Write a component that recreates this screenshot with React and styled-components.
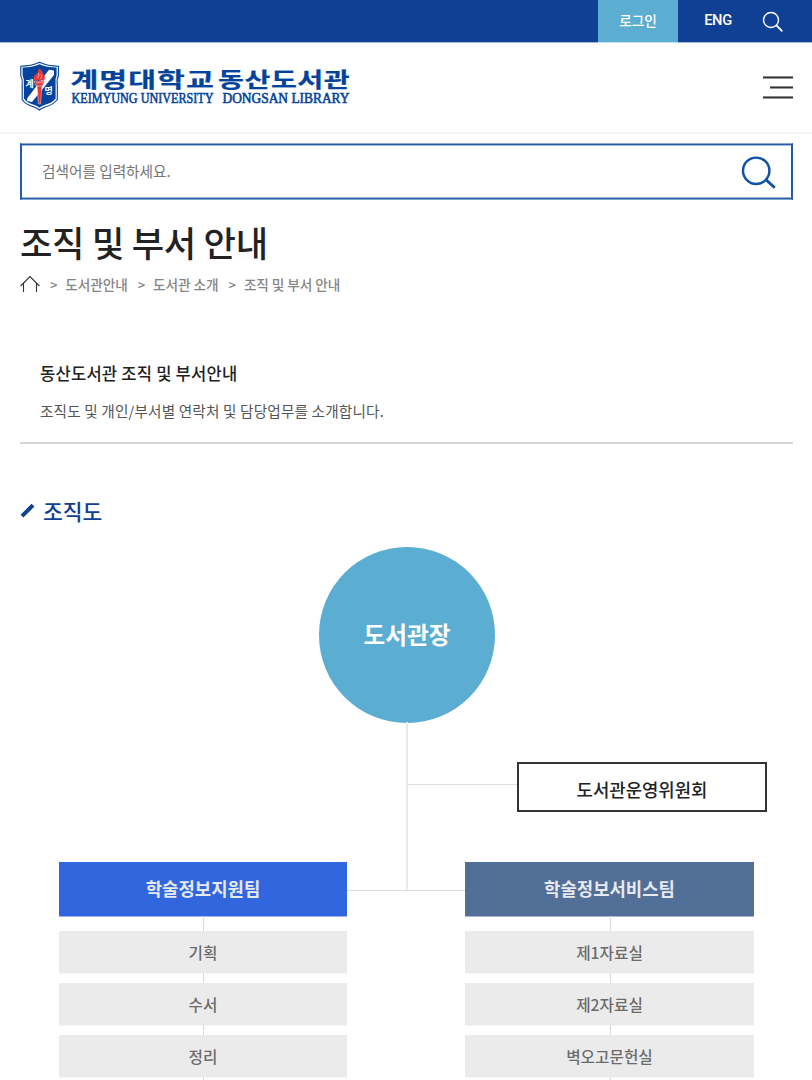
import React from "react";
import styled, { createGlobalStyle } from "styled-components";

const Global = createGlobalStyle`
  * { box-sizing: border-box; }
  html, body { margin: 0; padding: 0; }
  body {
    height: 1080px;
    overflow: hidden;
    background: #fff;
    font-family: "Noto Sans CJK KR", "Noto Sans", sans-serif;
    color: #222;
  }
  h1, h2, h3, p, ul, ol { margin: 0; padding: 0; list-style: none; font-weight: 500; }
  button, input { font: inherit; border: 0; padding: 0; background: none; }
`;

const Page = styled.div`
  width: 812px;
  height: 1080px;
  overflow: hidden;
`;

const TopBar = styled.div`
  display: flex;
  justify-content: flex-end;
  height: 42px;
  background: #0f4094;
  box-shadow: 0 1px 0 #a6b8d7;
`;

const LoginLink = styled.a`
  width: 80px;
  background: #5badd1;
  box-shadow: 0 1px 0 #c6e1ef;
  color: #fff;
  font-size: 13.67px;
  font-weight: 500;
  line-height: 41px;
  text-align: center;
`;

const LangLink = styled.a`
  width: 80px;
  color: #fff;
  font-family: Roboto, sans-serif;
  font-size: 14.65px;
  font-weight: 500;
  letter-spacing: -0.3px;
  line-height: 41px;
  text-align: center;
`;

const TopSearch = styled.button`
  display: flex;
  width: 54px;
  padding: 11px 0 0 4px;
`;

const Header = styled.header`
  display: flex;
  justify-content: space-between;
  height: 92px;
  padding: 19px 19px 0 20px;
  border-bottom: 2px solid #f3f3f3;
`;

const Menu = styled.button`
  display: flex;
  flex-direction: column;
  align-items: flex-end;
  gap: 7px;
  width: 30px;
  padding-top: 15px;
`;

const MenuBar = styled.span`
  width: ${(p) => p.$width}px;
  height: 3px;
  background: #333;
  border-top: 1px solid #8a8a8a;
  border-bottom: 1px solid #999;
`;

const Content = styled.main`
  padding: 9px 19px 0 20px;
`;

const SearchBox = styled.div`
  display: flex;
  justify-content: space-between;
  height: 57px;
  padding: 0 14px 0 20px;
  border: solid #255aa8;
  border-width: 1px 2px;
  border-top-color: #87a5d0;
  border-bottom-color: #87a5d0;
  box-shadow: inset 0 1px #255aa8, inset 0 -1px #255aa8, inset 0 2px #a3bbdc, inset 0 -2px #a3bbdc;
`;

const SearchInput = styled.input`
  flex: 1;
  height: 53px;
  outline: 0;
  font-size: 14.65px;
  &::placeholder { color: #757575; opacity: 1; }
`;

const SearchButton = styled.button`
  display: flex;
  padding-top: 12px;
`;

const PageTitle = styled.h1`
  margin-top: 15px;
  font-size: 35.2px;
  letter-spacing: -0.25px;
  line-height: 54px;
`;

const Breadcrumb = styled.ol`
  display: flex;
  align-items: center;
  height: 30px;
  color: #858585;
  font-size: 13.67px;
`;

const Crumb = styled.li`
  white-space: nowrap;
  letter-spacing: -0.08px;
  &::before {
    content: ">";
    margin: 0 8px 0 10px;
    font-size: 13px;
  }
`;

const Intro = styled.section`
  height: 145px;
  padding: 59px 20px 0;
  border-bottom: 2px solid #d6d6d6;
`;

const IntroTitle = styled.h2`
  font-size: 16.6px;
  letter-spacing: 0.2px;
  line-height: 30px;
`;

const IntroText = styled.p`
  margin-top: 8px;
  color: #555;
  font-size: 14.65px;
  font-weight: 400;
  letter-spacing: 0.15px;
  line-height: 30px;
`;

const SectionTitle = styled.h2`
  display: flex;
  align-items: center;
  gap: 8px;
  height: 36px;
  margin-top: 49px;
  color: #0f4094;
  font-size: 21.5px;
  line-height: 34px;
`;

const Director = styled.div`
  display: flex;
  align-items: center;
  justify-content: center;
  width: 175.5px;
  height: 175.5px;
  margin: 18px 0 0.5px 299.25px;
  padding-bottom: 2px;
  border-radius: 50%;
  background: #5badd1;
  color: #fff;
  font-size: 23.6px;
  font-weight: 700;
`;

const Trunk = styled.div`
  display: flex;
  align-items: flex-start;
  height: 140px;
  margin: -1px 0 0 386px;
  border-left: 2px solid #e9e9e9;
`;

const TrunkArm = styled.span`
  width: 109px;
  height: 1px;
  margin-top: 62px;
  background: #dedede;
`;

const Committee = styled.div`
  width: 250px;
  height: 50px;
  margin-top: 40px;
  border: 2px solid #333;
  font-size: 17.8px;
  font-weight: 500;
  line-height: 50px;
  text-align: center;
`;

const Teams = styled.div`
  display: flex;
  align-items: flex-start;
  padding-left: 39px;
`;

const Team = styled.section`
  width: ${(p) => p.$width}px;
`;

const Junction = styled.div`
  display: flex;
  justify-content: center;
  width: 118px;
  height: 29px;
  padding-left: 2px;
  border-bottom: 1px solid #dedede;
  &::before {
    content: "";
    width: 2px;
    background: #e9e9e9;
  }
`;

const TeamName = styled.h3`
  height: 54px;
  background: ${(p) => p.$color};
  box-shadow: 0 1px 0 ${(p) => p.$color}80;
  color: #e6e9ee;
  font-size: 17.8px;
  font-weight: 700;
  line-height: 53px;
  text-align: center;
`;

const Unit = styled.li`
  &::before {
    content: "";
    display: block;
    width: 1px;
    height: ${(p) => (p.$first ? 15 : 10)}px;
    margin-left: 50%;
    background: #d9d9d9;
  }
`;

const UnitName = styled.div`
  height: 42px;
  background: #ebebeb;
  box-shadow: 0 1px 0 #f5f5f5;
  color: #6b6b6b;
  font-size: 15.7px;
  font-weight: 500;
  line-height: 44px;
  text-align: center;
`;

const Logo = () => (
  <svg width="334" height="52" viewBox="0 0 334 52" role="img">
    <path d="M0.8 5.2Q11 5.2 19.5 1.3Q28 5.2 38.4 5.2V15Q36.5 18 37.3 23V38.5Q34 43.5 25 46Q21 47.4 19.5 49Q18 47.4 14 46Q5 43.5 2.2 38.5V23Q2.7 18 0.8 15Z" fill="#fff" stroke="#04439b" strokeWidth="1.1" />
    <path d="M2.6 6.6Q12 6.6 19.5 3.3Q27 6.6 36.6 6.6V14.5Q34.8 18 35.6 23V37.5Q32 42 24.5 44Q21 45.2 19.5 46.8Q18 45.2 14.5 44Q7 42 3.9 37.5V23Q4.4 18 2.6 14.5Z" fill="#04439b" />
    <path d="M7 37.5L29 8.8L34 9.5V14L12 41L7 40Z" fill="#fff" />
    <g fill="#fff" fontFamily="'Noto Sans CJK KR', sans-serif" fontWeight="700" fontSize="9">
      <text x="5.4" y="26">계</text>
      <text x="24.6" y="33">명</text>
    </g>
    <path d="M14 20H24.5L23 24.5H22L20.6 43H18.4L17 24.5H15.5Z" fill="#e33a3c" stroke="#fff" strokeWidth="0.4" />
    <path d="M14.2 19.5Q12.4 15 16.2 12.9Q19.2 11 18.2 7.2Q22.8 9 22.8 12.2Q26 14.8 24.2 19.5Z" fill="#e33a3c" />
    <path d="M16 21.7H23M17 25H21.5M18.5 12Q19.8 14.3 17.5 17.3M21.2 13.4Q22 15.5 20.8 17.8" stroke="#fff" strokeWidth="0.5" fill="none" />
    <g fill="#04439b">
      <g fontFamily="'Noto Sans CJK KR', sans-serif" fontWeight="700" stroke="#04439b" strokeWidth="0.25">
        <text transform="translate(50.5 25.7) scale(1.44 1)" fontSize="21" textLength="99.5">계명대학교</text>
        <text transform="translate(198 25.7) scale(1.34 1)" fontSize="21" textLength="98.3">동산도서관</text>
      </g>
      <g fontFamily="'Liberation Serif', serif" fontSize="13.6" stroke="#04439b" strokeWidth="0.55">
        <text x="51.5" y="42.4" textLength="142" lengthAdjust="spacingAndGlyphs">KEIMYUNG UNIVERSITY</text>
        <text x="202.5" y="42.4" textLength="127" lengthAdjust="spacingAndGlyphs">DONGSAN LIBRARY</text>
      </g>
    </g>
  </svg>
);

const teams = [
  { name: "학술정보지원팀", color: "#3166df", width: 288, units: ["기획", "수서", "정리"] },
  { name: "학술정보서비스팀", color: "#526f97", width: 289, units: ["제1자료실", "제2자료실", "벽오고문헌실"] },
];

const TeamColumn = ({ team }) => (
  <Team $width={team.width}>
    <TeamName $color={team.color}>{team.name}</TeamName>
    <ul>
      {team.units.map((unit, i) => (
        <Unit key={unit} $first={i === 0}>
          <UnitName>{unit}</UnitName>
        </Unit>
      ))}
      <Unit />
    </ul>
  </Team>
);

export default function App() {
  return (
    <Page>
      <Global />
      <TopBar>
        <LoginLink>로그인</LoginLink>
        <LangLink>ENG</LangLink>
        <TopSearch>
          <svg width="22" height="22" viewBox="0 0 22 22" fill="none" stroke="#fff" strokeWidth="1.4">
            <circle cx="9" cy="9" r="7.5" />
            <path d="M14.2 14.2L20.3 20.3" strokeWidth="1.9" />
          </svg>
        </TopSearch>
      </TopBar>
      <Header>
        <Logo />
        <Menu>
          <MenuBar $width={30} />
          <MenuBar $width={23} />
          <MenuBar $width={30} />
        </Menu>
      </Header>
      <Content>
        <SearchBox>
          <SearchInput placeholder="검색어를 입력하세요." />
          <SearchButton>
            <svg width="36" height="36" viewBox="0 0 36 36" fill="none" stroke="#0f51a5" strokeWidth="2.4">
              <circle cx="15.2" cy="14.8" r="13.2" />
              <path d="M24.8 23.6L33.8 31.8" strokeWidth="2.8" />
            </svg>
          </SearchButton>
        </SearchBox>
        <PageTitle>조직 및 부서 안내</PageTitle>
        <Breadcrumb>
          <svg width="20" height="18" viewBox="0 0 20 18" fill="none" stroke="#333" strokeWidth="1.1">
            <path d="M0.6 11L10 1.5L19.4 11M3.5 8.2V17M16.5 8.2V17" />
          </svg>
          <Crumb>도서관안내</Crumb>
          <Crumb>도서관 소개</Crumb>
          <Crumb>조직 및 부서 안내</Crumb>
        </Breadcrumb>
        <Intro>
          <IntroTitle>동산도서관 조직 및 부서안내</IntroTitle>
          <IntroText>조직도 및 개인/부서별 연락처 및 담당업무를 소개합니다.</IntroText>
        </Intro>
        <SectionTitle>
          <svg width="15" height="16" viewBox="0 0 15 16">
            <path d="M2 13.2L13 2.2" stroke="#0f4094" strokeWidth="4" />
          </svg>
          조직도
        </SectionTitle>
        <Director>도서관장</Director>
        <Trunk>
          <TrunkArm />
          <Committee>도서관운영위원회</Committee>
        </Trunk>
        <Teams>
          <TeamColumn team={teams[0]} />
          <Junction />
          <TeamColumn team={teams[1]} />
        </Teams>
      </Content>
    </Page>
  );
}
